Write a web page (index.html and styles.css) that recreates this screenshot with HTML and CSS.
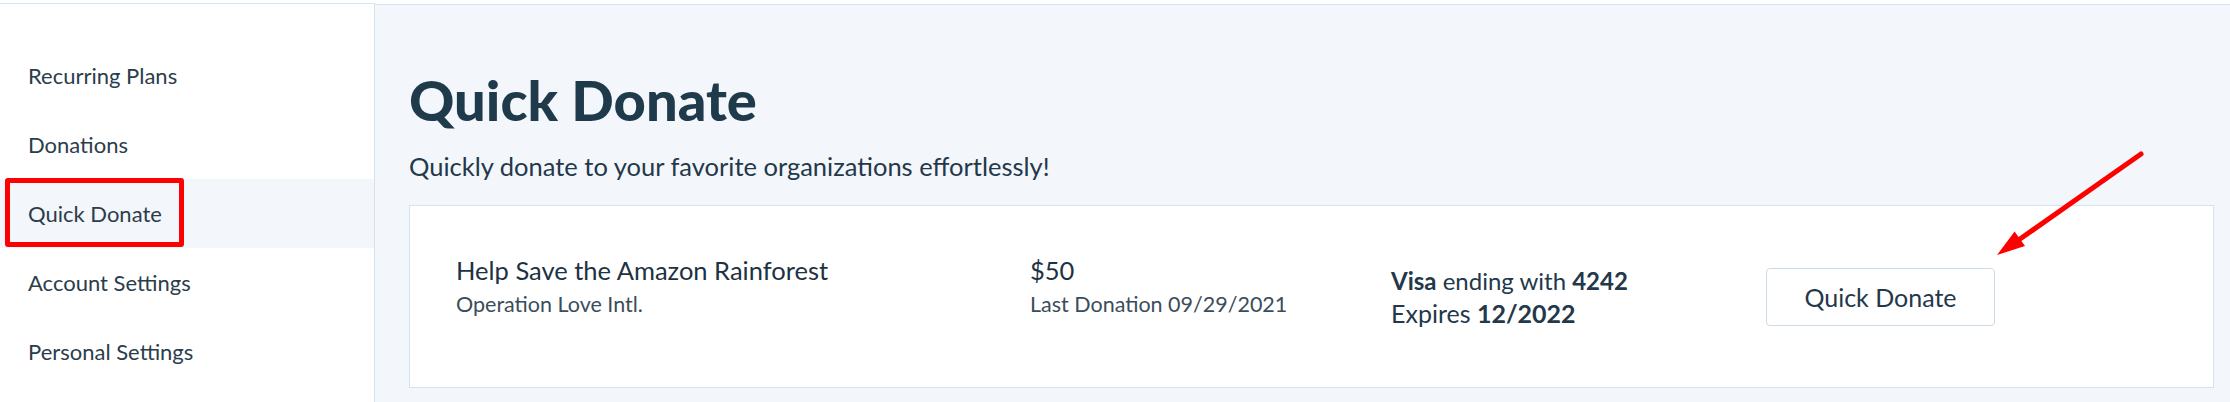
FILE: index.html
```html
<!DOCTYPE html>
<html lang="en">
<head>
<meta charset="utf-8">
<title>Quick Donate</title>
<link rel="stylesheet" href="styles.css">
</head>
<body>
<div class="topbar"></div>
<div class="layout">
  <aside class="sidebar">
    <nav class="nav">
      <a class="nav-item" href="#">Recurring Plans</a>
      <a class="nav-item" href="#">Donations</a>
      <a class="nav-item active" href="#">Quick Donate<span class="highlight"></span></a>
      <a class="nav-item" href="#">Account Settings</a>
      <a class="nav-item" href="#">Personal Settings</a>
    </nav>
  </aside>
  <main class="main">
    <h1 class="title">Quick Donate</h1>
    <p class="subtitle">Quickly donate to your favorite organizations effortlessly!</p>
    <section class="card">
      <div class="col col-org">
        <div class="primary">Help Save the Amazon Rainforest</div>
        <div class="secondary">Operation Love Intl.</div>
      </div>
      <div class="col col-amount">
        <div class="primary">$50</div>
        <div class="secondary">Last Donation 09/29/2021</div>
      </div>
      <div class="col col-pay">
        <div class="pay-line"><span class="semi">Visa</span> ending with <b>4242</b></div>
        <div>Expires <b>12/2022</b></div>
      </div>
      <button class="btn" type="button">Quick Donate</button>
    </section>
  </main>
</div>
<svg class="arrow" width="160" height="120" viewBox="0 0 160 120" aria-hidden="true">
  <line x1="151" y1="9" x2="30" y2="94" stroke="#ff0000" stroke-width="5" stroke-linecap="round"/>
  <polygon points="7,110 35,101 24.6,86.5" fill="#ff0000"/>
</svg>
</body>
</html>
```

FILE: styles.css
```css
* { box-sizing: border-box; }
html, body { margin: 0; padding: 0; }
body {
  width: 2230px;
  height: 402px;
  overflow: hidden;
  background: #ffffff;
  font-family: Lato, "Noto Sans", sans-serif;
  color: #23384a;
  position: relative;
}
.topbar { height: 3px; background: #ffffff; }
.layout {
  display: flex;
  height: 399px;
}
.sidebar {
  width: 375px;
  flex: 0 0 375px;
  background: #ffffff;
  border-top: 1px solid #d6e4f1;
  border-right: 1px solid #d6e4f1;
  padding-top: 37px;
}
.nav { display: flex; flex-direction: column; }
.nav-item {
  position: relative;
  display: flex;
  align-items: center;
  height: 69px;
  padding-left: 28px;
  font-size: 22px;
  color: #2b3d4b;
  text-decoration: none;
}
.nav-item.active { background: #f3f6fa; }
.highlight {
  position: absolute;
  left: 5px;
  top: -1px;
  width: 179px;
  height: 69px;
  border: 5px solid #ff0000;
  border-radius: 3px;
}
.main {
  position: relative;
  flex: 1;
  margin-top: 1px;
  background: #f3f6fa;
  border-top: 1px solid #d6e4f1;
  padding: 61px 16px 0 34px;
}
.title {
  margin: 0;
  font-size: 56px;
  line-height: 67px;
  font-weight: 900;
  color: #1f3a4b;
}
.subtitle {
  margin: 18px 0 0;
  font-size: 25.5px;
  line-height: 30px;
  color: #23384a;
}
.card {
  margin-top: 24px;
  height: 183px;
  background: #ffffff;
  border: 1px solid #d5e3ef;
  display: grid;
  grid-template-columns: 574px 361px 375px 229px;
  align-items: center;
  padding-left: 46px;
}
.col-org, .col-amount { padding-bottom: 19px; }
.primary { font-size: 25.5px; line-height: 34px; color: #1d3242; }
.secondary { font-size: 21.5px; line-height: 34px; color: #3a4d5b; }
.col-pay { font-size: 25px; line-height: 33px; color: #23384a; }
.col-pay .pay-line { font-size: 24px; }
.col-pay b { font-weight: 700; }
.semi { font-weight: 700; }
.btn {
  width: 229px;
  height: 58px;
  background: #ffffff;
  border: 1px solid #cddbe7;
  border-radius: 4px;
  font-family: inherit;
  font-size: 25px;
  color: #23384a;
  padding: 0;
}
.arrow {
  position: absolute;
  left: 1990px;
  top: 145px;
}
```
